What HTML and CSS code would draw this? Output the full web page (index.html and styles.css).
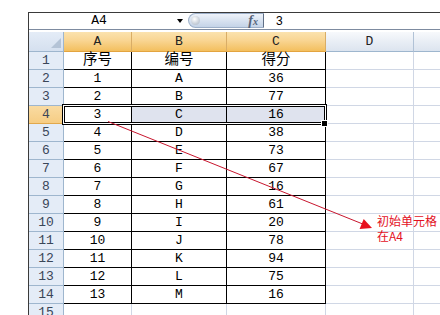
FILE: index.html
```html
<!DOCTYPE html>
<html>
<head>
<meta charset="utf-8">
<link rel="stylesheet" href="styles.css">
</head>
<body>
<div class="excel">
  <div class="fbar">
    <div class="namebox"><span class="name">A4</span><span class="dd"></span></div>
    <div class="pill"><span class="knob"></span><span class="fx"><i class="ff">f</i><i class="fxx">x</i></span></div>
    <div class="formula">3</div>
  </div>
  <div class="sheet">
    <div class="corner"><svg width="10" height="10" viewBox="0 0 10 10"><polygon points="10,0 10,10 0,10" fill="#b4c3d6"/></svg></div>
    <div class="ch on">A</div><div class="ch on">B</div><div class="ch on">C</div><div class="ch">D</div><div class="ch last"></div>

    <div class="rh">1</div><div class="c t cjk">序号</div><div class="c t cjk">编号</div><div class="c t cjk">得分</div><div class="c"></div><div class="c"></div>
    <div class="rh">2</div><div class="c t">1</div><div class="c t">A</div><div class="c t">36</div><div class="c"></div><div class="c"></div>
    <div class="rh">3</div><div class="c t">2</div><div class="c t">B</div><div class="c t">77</div><div class="c"></div><div class="c"></div>
    <div class="rh on">4</div><div class="c t">3</div><div class="c t sel">C</div><div class="c t sel">16</div><div class="c"></div><div class="c"></div>
    <div class="rh">5</div><div class="c t">4</div><div class="c t">D</div><div class="c t">38</div><div class="c"></div><div class="c"></div>
    <div class="rh">6</div><div class="c t">5</div><div class="c t">E</div><div class="c t">73</div><div class="c"></div><div class="c"></div>
    <div class="rh">7</div><div class="c t">6</div><div class="c t">F</div><div class="c t">67</div><div class="c"></div><div class="c"></div>
    <div class="rh">8</div><div class="c t">7</div><div class="c t">G</div><div class="c t">16</div><div class="c"></div><div class="c"></div>
    <div class="rh">9</div><div class="c t">8</div><div class="c t">H</div><div class="c t">61</div><div class="c"></div><div class="c"></div>
    <div class="rh">10</div><div class="c t">9</div><div class="c t">I</div><div class="c t">20</div><div class="c"></div><div class="c"></div>
    <div class="rh">11</div><div class="c t">10</div><div class="c t">J</div><div class="c t">78</div><div class="c"></div><div class="c"></div>
    <div class="rh">12</div><div class="c t">11</div><div class="c t">K</div><div class="c t">94</div><div class="c"></div><div class="c"></div>
    <div class="rh">13</div><div class="c t">12</div><div class="c t">L</div><div class="c t">75</div><div class="c"></div><div class="c"></div>
    <div class="rh">14</div><div class="c t">13</div><div class="c t">M</div><div class="c t">16</div><div class="c"></div><div class="c"></div>
    <div class="rh">15</div><div class="c"></div><div class="c"></div><div class="c"></div><div class="c"></div><div class="c"></div>
  </div>
</div>
<div class="selbox"></div>
<div class="handle"></div>
<svg class="arrow" width="440" height="315" viewBox="0 0 440 315">
  <line x1="108" y1="121.5" x2="364" y2="224.5" stroke="#c8162e" stroke-width="1"/>
  <polygon points="372,228 363.7,219 359.6,229" fill="#e8101e"/>
</svg>
<div class="note">初始单元格<br>在A4</div>
</body>
</html>
```
FILE: styles.css
```css
html, body {
  margin: 0;
  padding: 0;
  background: #fff;
}
body {
  position: relative;
  width: 440px;
  height: 315px;
  overflow: hidden;
  font-family: "Liberation Mono", "Noto Sans CJK SC", monospace;
}
.excel {
  margin: 12px 0 0 28px;
  width: 412px;
  height: 303px;
  border-left: 1px solid #3a3a3a;
  overflow: hidden;
}
.fbar {
  display: flex;
  height: 16px;
  border-top: 1px solid #3a3a3a;
  border-bottom: 1px solid #7d8ba0;
  background: #fff;
}
.namebox {
  width: 159px;
  display: flex;
  align-items: center;
}
.name {
  width: 140px;
  text-align: center;
  font-size: 13px;
  line-height: 16px;
  color: #000;
}
.dd {
  margin-left: 8px;
  width: 0;
  height: 0;
  border-left: 3.5px solid transparent;
  border-right: 3.5px solid transparent;
  border-top: 4px solid #000;
}
.pill {
  width: 76px;
  height: 15px;
  display: flex;
  align-items: center;
  justify-content: space-between;
  border: 1px solid #9db0c9;
  border-right: 1px solid #5f6f86;
  border-radius: 8px 0 0 8px;
  background: linear-gradient(#eef3fa, #d6e1ef 55%, #c4d3e7);
  box-sizing: border-box;
  padding: 0 5px 0 2px;
}
.knob {
  width: 9px;
  height: 9px;
  border-radius: 50%;
  background: radial-gradient(circle at 40% 35%, #ffffff, #c7cfd9 60%, #aeb9c8);
}
.fx {
  font-family: "Liberation Serif", serif;
  color: #56647a;
  font-weight: bold;
  line-height: 13px;
}
.ff {
  font-size: 14px;
}
.fxx {
  font-size: 10px;
}
.formula {
  flex: 1;
  padding-left: 12px;
  font-family: "Liberation Sans", sans-serif;
  font-size: 12px;
  line-height: 16px;
  color: #000;
}
.sheet {
  margin-top: 2px;
  display: grid;
  grid-template-columns: 35px 68px 95px 99px 88px 1fr;
  grid-template-rows: 20px repeat(15, 18px);
  font-size: 13px;
}
.sheet > div {
  box-sizing: border-box;
  text-align: center;
  line-height: 17px;
  white-space: nowrap;
}
.sheet > .cjk {
  font-size: 14.5px;
}
.corner {
  background: linear-gradient(#e4ecf7, #d5e0ef);
  border-right: 1px solid #9eb6ce;
  border-bottom: 1px solid #9eb6ce;
  display: flex;
  justify-content: flex-end;
  align-items: flex-end;
  padding: 0 2px 3px 0;
}
.corner svg {
  display: block;
}
.sheet > .ch {
  background: linear-gradient(#f7f9fc, #e9eef5 50%, #dce4ef);
  border-right: 1px solid #b1c2d6;
  border-bottom: 1px solid #9eb6ce;
  color: #222;
  line-height: 19px;
}
.sheet > .ch.on {
  background: linear-gradient(#fbe2ae, #f9d592 45%, #f3bf5e);
  border-right: 1px solid #d9ad66;
  border-bottom: 1px solid #e3a43f;
}
.sheet > .ch.last {
  border-right: none;
}
.rh {
  background: #e4ecf7;
  border-right: 1px solid #9eb6ce;
  border-bottom: 1px solid #9eb6ce;
  color: #3a4658;
}
.rh.on {
  background: linear-gradient(#f9dba2, #f6cd84);
  border-bottom: 1px solid #e1a84c;
  border-right: 1px solid #e1a84c;
}
.c {
  border-right: 1px solid #d0d7e5;
  border-bottom: 1px solid #d0d7e5;
  color: #000;
}
.c.t {
  border-right: 1px solid #000;
  border-bottom: 1px solid #000;
}
.c.sel {
  background: #dfe3ee;
}
.selbox {
  position: absolute;
  left: 62px;
  top: 104px;
  width: 265px;
  height: 21px;
  box-sizing: border-box;
  border: 1px solid #000;
  box-shadow: inset 0 0 0 1px #fff, inset 0 0 0 2px #000;
  pointer-events: none;
}
.handle {
  position: absolute;
  left: 322px;
  top: 121px;
  width: 5px;
  height: 5px;
  background: #000;
  outline: 1px solid #fff;
}
.arrow {
  position: absolute;
  left: 0;
  top: 0;
  pointer-events: none;
}
.note {
  position: absolute;
  left: 377px;
  top: 213px;
  font-family: "Noto Sans CJK SC", sans-serif;
  font-size: 12px;
  line-height: 15px;
  color: #e3101e;
}
```
